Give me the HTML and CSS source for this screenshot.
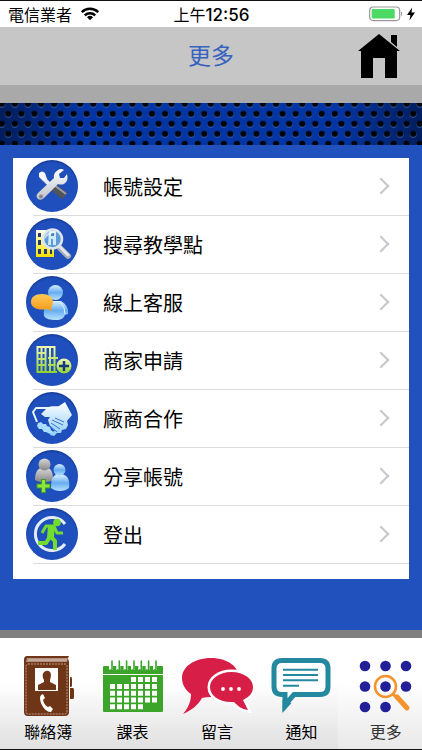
FILE: index.html
```html
<!doctype html>

<html lang="zh-Hant">
  <head>
    <meta charset="utf-8"/>
    <title>更多</title>
    <meta name="viewport" content="width=device-width,initial-scale=1.0"/>
    <link rel="stylesheet" href="styles.css">
  </head>
  <body>
    <div class="status">
      <div class="status__side">
        <span>電信業者</span>
        <svg class="status__wifi" width="20" height="14" viewBox="0 0 20 14">
          <g fill="none" stroke="#000" stroke-width="2.5">
            <path d="M1.8 5.2a11.6 11.6 0 0 1 16.4 0"/>
            <path d="M4.8 8.3a7.4 7.4 0 0 1 10.4 0"/>
          </g>
          <path d="M10 13.2l-3-3a4.3 4.3 0 0 1 6 0z"/>
        </svg>
      </div>
      <span>上午<span class="status__time">12:56</span></span>
      <div class="status__side status__side-right">
        <svg width="34" height="16" viewBox="0 0 34 16">
          <rect x=".7" y="1" width="30" height="13.6" rx="3.5" fill="#fff" stroke="#999" stroke-width="1.2"/>
          <rect x="2.7" y="3" width="23" height="9.6" rx="1.2" fill="#4cd964"/>
          <path d="M32 5.5c1.6.7 1.6 4 0 4.7z" fill="#999"/>
        </svg>
        <svg width="8" height="14" viewBox="0 0 8 14">
          <path d="M5.2.5L0 8h3.4l-1 5.5L8 5.6H4.5z"/>
        </svg>
      </div>
    </div>

    <header class="header">
      <h1 class="header__title">更多</h1>
      <button class="header__home" type="button" aria-label="首頁">
        <svg width="42" height="44" viewBox="0 0 42 44">
          <path d="M21 0L42 17h-3v27H27V24H15v20H3V17H0zM33 1h6v12l-6-5z"/>
        </svg>
      </button>
    </header>

    <!-- perforated metal strip -->
    <svg class="mesh" aria-hidden="true">
      <defs>
        <pattern id="holes" x="1.8" y=".8" width="13.06" height="20" patternUnits="userSpaceOnUse">
          <g fill="#4a6cb5">
            <ellipse cx="6.5" cy="10.6" rx="3.300" ry="3.200"/>
            <ellipse cx="0" cy=".6" rx="3.300" ry="3.200"/>
            <ellipse cx="13.060" cy=".6" rx="3.300" ry="3.200"/>
          </g>
          <g fill="#02040c">
            <ellipse cx="6.500" cy="10" rx="3.200" ry="3"/>
            <ellipse cx="0" cy="0" rx="3.200" ry="3"/>
            <ellipse cx="13.060" cy="0" rx="3.200" ry="3"/>
            <ellipse cx="0" cy="20" rx="3.200" ry="3"/>
            <ellipse cx="13.060" cy="20" rx="3.200" ry="3"/>
          </g>
        </pattern>
      </defs>
      <rect width="100%" height="100%" fill="url(#holes)"/>
    </svg>

    <main class="main">
      <ul class="menu">
        <li class="menu__item">
          <a class="menu__link" href="#account">
            <svg class="menu__icon" viewBox="0 0 52 52">
              <defs>
                <radialGradient id="disc" cx=".5" cy=".53" r=".53">
                  <stop offset=".88" stop-color="#1f4fbd"/>
                  <stop offset="1" stop-color="#143a96"/>
                </radialGradient>
                <linearGradient id="silver" x2="0" y2="1">
                  <stop stop-color="#fff"/>
                  <stop offset="1" stop-color="#bcc1c8"/>
                </linearGradient>
                <linearGradient id="grey" x2="0" y2="1">
                  <stop stop-color="#d8d8d8"/>
                  <stop offset="1" stop-color="#858585"/>
                </linearGradient>
                <linearGradient id="sky" x2="0" y2="1">
                  <stop stop-color="#d6f0ff"/>
                  <stop offset=".5" stop-color="#67adf0"/>
                  <stop offset="1" stop-color="#b5e2ff"/>
                </linearGradient>
                <linearGradient id="ice" x2="0" y2="1">
                  <stop stop-color="#fff"/>
                  <stop offset="1" stop-color="#8fcdf8"/>
                </linearGradient>
                <linearGradient id="lime" x2="0" y2="1">
                  <stop stop-color="#f3f7b0"/>
                  <stop offset="1" stop-color="#8fd131"/>
                </linearGradient>
                <linearGradient id="orange" x2="0" y2="1">
                  <stop stop-color="#ffca55"/>
                  <stop offset="1" stop-color="#f39a18"/>
                </linearGradient>
                <linearGradient id="building" x2="0" y2="1">
                  <stop stop-color="#fffef0"/>
                  <stop offset=".5" stop-color="#fff36c"/>
                  <stop offset="1" stop-color="#f5e100"/>
                </linearGradient>
              </defs>
              <circle cx="26" cy="26" r="26" fill="url(#disc)"/>
              <path d="M16 14l3 6 8 8" fill="none" stroke="#e9ebf0" stroke-width="4"/>
              <path d="M13 13q3-3 6 0l2 6-4 2-4-4z" fill="#f3f4f7"/>
              <path d="M27 27l12 9" stroke="#50545c" stroke-width="8"/>
              <path d="M28 25l12 9" stroke="#9a9ea6" stroke-width="2"/>
              <path d="M32 10q3-2 6 0l-5 4 1 4 4 0 3-4q2 7-3 10-3 1-6 0L18 38q-3 3-6 1-3-3 0-6l16-15q-1-5 4-8z" fill="url(#silver)"/>
              <circle cx="15" cy="36.500" r="2" fill="#83878e"/>
            </svg>
            <span>帳號設定</span>
          </a>
        </li>
        <li class="menu__item">
          <a class="menu__link" href="#search">
            <svg class="menu__icon" viewBox="0 0 52 52">
              <circle cx="26" cy="26" r="26" fill="url(#disc)"/>
              <path d="M10 12h18v27H10z" fill="url(#building)"/>
              <path d="M12 15h3v4h-3zM18 15h3v4h-3zM12 22h3v5h-3zM18 22h3v5h-3zM12 31h3v5h-3zM18 31h3v5h-3zM24 31h2v5h-2z" fill="#273d70"/>
              <path d="M33 29l9 9" stroke="#a4abb9" stroke-width="6" stroke-linecap="round"/>
              <path d="M33 28l9 9" stroke="#e3e6ec" stroke-width="3" stroke-linecap="round"/>
              <circle cx="26.500" cy="21" r="9.500" fill="#5f9bd8" stroke="#dfe6ec" stroke-width="2.500"/>
              <path d="M23 13h7v14h-3v-6h-2v6h-3z" fill="#cdeaf8"/>
              <path d="M25 15h3v3h-3z" fill="#4a83c4"/>
              <path d="M18 22c1-8 8-10 13-8-5 1-9 3-13 8z" fill="#fff" opacity=".6"/>
            </svg>
            <span>搜尋教學點</span>
          </a>
        </li>
        <li class="menu__item">
          <a class="menu__link" href="#service">
            <svg class="menu__icon" viewBox="0 0 52 52">
              <circle cx="26" cy="26" r="26" fill="url(#disc)"/>
              <path d="M18 40c-1-6 1-12 6-15h11c5 3 8 8 7 13l-3 1c-1 3-4 5-9 5-6 0-10-1-12-4z" fill="url(#sky)"/>
              <path d="M35 27q4 4 4 11" fill="none" stroke="#e1f5ff"/>
              <circle cx="29.500" cy="16.500" r="7.500" fill="url(#sky)"/>
              <path d="M16 18c7 0 11 3 11 8 0 2-1 4-2 5l1 4-5-2c-8 2-16-1-16-7 0-5 4-8 11-8z" fill="url(#orange)"/>
            </svg>
            <span>線上客服</span>
          </a>
        </li>
        <li class="menu__item">
          <a class="menu__link" href="#shop">
            <svg class="menu__icon" viewBox="0 0 52 52">
              <circle cx="26" cy="26" r="26" fill="url(#disc)"/>
              <path d="M11.500 12v27M15.500 12v27M19.500 12v27M24 12v27M28.500 12v27M11 13h18M11 19h9M11 25h9M11 31h9M11 38h20M22 24h10M22 31h9" fill="none" stroke="url(#lime)" stroke-width="2"/>
              <circle cx="38" cy="32" r="8.500" fill="#1f4fbd"/>
              <circle cx="38" cy="32" r="7.500" fill="url(#lime)"/>
              <path d="M38 27v10M33 32h10" stroke="#12397d" stroke-width="2.500"/>
            </svg>
            <span>商家申請</span>
          </a>
        </li>
        <li class="menu__item">
          <a class="menu__link" href="#partner">
            <svg class="menu__icon" viewBox="0 0 52 52">
              <circle cx="26" cy="26" r="26" fill="url(#disc)"/>
              <path d="M24 16H10l-3 4 4 10" fill="none" stroke="#e7f5ff" stroke-width="2" stroke-linejoin="round"/>
              <path d="M39 10l7 13-5 6 1 4-2 4-4 1-1 3-4 0-3 3-4-1 1-3 4-1-5-5-2-6 2-3-5 0-4-3 6-6c5-3 9-1 12-2z" fill="url(#ice)"/>
              <path d="M26 28l11 5M25 31l9 6M24 34l7 6M29 26l9 4" stroke="#3773c8"/>
              <path d="M12 31l3-1 2 2 3 0 1 2 3 1 1 3 2 2-3 2-4-2-2 0-2-3-3 0-2-3z" fill="#a8ddff"/>
            </svg>
            <span>廠商合作</span>
          </a>
        </li>
        <li class="menu__item">
          <a class="menu__link" href="#share">
            <svg class="menu__icon" viewBox="0 0 52 52">
              <circle cx="26" cy="26" r="26" fill="url(#disc)"/>
              <path d="M9 30c0-7 2-11 6-12h7c4 1 5 6 5 12-5 3-13 3-18 0z" fill="url(#grey)"/>
              <circle cx="18.500" cy="14.500" r="6" fill="url(#grey)"/>
              <path d="M25 38c0-7 1-12 5-13h8c4 1 6 6 5 13-5 4-13 4-18 0z" fill="url(#sky)"/>
              <circle cx="33.500" cy="20" r="6" fill="url(#sky)"/>
              <path d="M17.500 29v14M10.500 36h14" stroke="#3f9b26" stroke-width="5"/>
              <path d="M17.500 30v12M11.500 36h12" stroke="#8be83b" stroke-width="3"/>
            </svg>
            <span>分享帳號</span>
          </a>
        </li>
        <li class="menu__item">
          <a class="menu__link" href="#logout">
            <svg class="menu__icon" viewBox="0 0 52 52">
              <circle cx="26" cy="26" r="26" fill="url(#disc)"/>
              <path d="M39 16a16.500 16.500 0 1 0 0 20" fill="none" stroke="#e4ecfa" stroke-width="3"/>
              <circle cx="31" cy="14.500" r="3.800" fill="#72dc2f"/>
              <g fill="none" stroke="#72dc2f" stroke-width="4" stroke-linejoin="round">
                <path d="M16 25l4-7h8l3 7h6" stroke-width="3"/>
                <path d="M25 27l-5 8h-8"/>
                <path d="M24 28l5 5v9"/>
              </g>
              <path d="M22 17l7 1-1 11-7 1z" fill="#72dc2f"/>
            </svg>
            <span>登出</span>
          </a>
        </li>
      </ul>
    </main>

    <nav class="tabs">
      <a class="tab" href="#contacts">
        <svg class="tab__icon" viewBox="0 0 72 64">
          <path d="M15 2h42l-1 2 1 4v50q0 4-4 4H16q-4 0-4-4V6q0-4 3-4z" fill="#6e3516"/>
          <path d="M15 4h41l-1 4H14z" fill="#b39282"/>
          <path d="M16 6h39" stroke="#e7d9d0" stroke-width=".6"/>
          <path d="M58 23h1q1 0 1 2v6q0 2-1 2h-1zM58 34h3q1 0 1 2v7q0 2-1 2h-3z" fill="#6e3516"/>
          <rect x="14" y="10" width="41" height="50" rx="2" fill="none" stroke="#d7bba8" stroke-width=".8" stroke-dasharray="2 1"/>
          <path d="M23 14h23v23H23z" fill="#fff"/>
          <path d="M26 36v-5l6-3v-2c-2-3-2-8 2-9 5-1 6 4 4 9v2l6 3v5z" fill="#6e3516"/>
          <path d="M31 40l2 4-2 2c1 4 3 6 5 7l2-1 3 3-2 3c-6 0-11-8-11-14q0-3 3-4z" fill="#fff"/>
        </svg>
        <span>聯絡簿</span>
      </a>
      <a class="tab" href="#schedule">
        <svg class="tab__icon" viewBox="0 0 72 64">
          <path d="M7 12h58q1 0 1 1v7H6v-7q0-1 1-1zM6 21h60v36q0 1-1 1H7q-1 0-1-1z" fill="#3ba52a"/>
          <g fill="none" stroke="#fff" stroke-width="4">
            <path d="M14 10v6M21.300 10v6M28.600 10v6M36 10v6M43.300 10v6M50.600 10v6M58 10v6"/>
          </g>
          <path d="M15 7v8q0 2-2 1M22.300 7v8q0 2-2 1M29.600 7v8q0 2-2 1M37 7v8q0 2-2 1M44.300 7v8q0 2-2 1M51.600 7v8q0 2-2 1M59 7v8q0 2-2 1" fill="none" stroke="#3ba52a" stroke-width="1.600" stroke-linecap="round"/>
          <g fill="none" stroke="#fff" stroke-width="5" stroke-dasharray="5 2">
            <path d="M34 25.500h26M13 32.500h47M13 39.300h47M13 46h47M13 52.800h33"/>
          </g>
        </svg>
        <span>課表</span>
      </a>
      <a class="tab" href="#messages">
        <svg class="tab__icon" viewBox="0 0 72 64">
          <path d="M30 4c17 0 28 9 28 20S47 43 30 43q-5 0-9 1c-4 7-10 12-19 16 5-6 8-12 8-20C4 36 1 30 1 24 1 13 13 4 30 4z" fill="#d71e46"/>
          <path d="M50.500 18C63 18 72 25 72 33c0 6-4 10-10 13l5 10c-7-1-10-4-14-8h-3c-13 0-21-7-21-15s9-15 21.500-15z" fill="#d71e46" stroke="#fff" stroke-width="5" paint-order="stroke"/>
          <g fill="#fff">
            <circle cx="42" cy="35" r="1.900"/>
            <circle cx="50" cy="35" r="1.900"/>
            <circle cx="58" cy="35" r="1.900"/>
          </g>
        </svg>
        <span>留言</span>
      </a>
      <a class="tab" href="#notices">
        <svg class="tab__icon" viewBox="0 0 72 64">
          <path d="M17 6.500h38q8 0 8 8v18q0 8-8 8H29L20 51V40.500h-3q-8 0-8-8v-18q0-8 8-8z" fill="#fff" stroke="#24889e" stroke-width="5"/>
          <path d="M17.500 46v13l9-10z" fill="#24889e"/>
          <path d="M18 15.700h35M18 21h35M18 26.300h35M18 31.700h16" stroke="#24889e" stroke-width="2"/>
        </svg>
        <span>通知</span>
      </a>
      <a class="tab tab-active" href="#more" aria-current="page">
        <svg class="tab__icon" viewBox="0 0 72 64">
          <g fill="#221f99">
            <circle cx="15" cy="12" r="5.300"/>
            <circle cx="35.500" cy="12" r="5.300"/>
            <circle cx="56" cy="12" r="5.300"/>
            <circle cx="15" cy="32.500" r="5.300"/>
            <circle cx="35.500" cy="32.500" r="5.300"/>
            <circle cx="56" cy="32.500" r="5.300"/>
            <circle cx="15" cy="53" r="5.300"/>
            <circle cx="35.500" cy="53" r="5.300"/>
          </g>
          <circle cx="35.500" cy="32.500" r="10.500" fill="none" stroke="#f7932c" stroke-width="2.500"/>
          <path d="M43 40l5 5" stroke="#f7932c" stroke-width="3"/>
          <path d="M47 43l10 11" stroke="#f7932c" stroke-width="5" stroke-linecap="round"/>
        </svg>
        <span>更多</span>
      </a>
    </nav>
  </body>
</html>
```
FILE: styles.css
```css
body {
  font-family: "Liberation Sans", "Noto Sans CJK TC", sans-serif;
  font-size: 16px;
  color: #000;
  background-color: #2151bd;
  margin: 0;
  min-height: 100vh;
  box-sizing: border-box;
  border-top: 1px solid #111;
  border-bottom: 1px solid #111;
  display: flex;
  flex-direction: column;
}
.status {
  display: flex;
  align-items: center;
  height: 26px;
  padding: 0 7px 0 8px;
  background-color: #fff;
  font-family: Inter, "Noto Sans CJK TC", sans-serif;
}
.status__side {
  flex: 1;
  display: flex;
  align-items: center;
  gap: 8px;
}
.status__side-right {
  justify-content: flex-end;
  gap: 4px;
}
.status__time {
  font-size: 17px;
  font-weight: 500;
}
.header {
  display: grid;
  grid-template-columns: 1fr auto 1fr;
  align-items: center;
  height: 58px;
  padding: 0 22px;
  background-color: #c6c6c6;
  border-bottom: 18px solid #a9a9a9;
}
.header__title {
  grid-column: 2;
  margin: 0;
  font-size: 23px;
  font-weight: 400;
  line-height: 32px;
  color: #3763bf;
}
.header__home {
  justify-self: end;
  padding: 0;
  border: 0;
  background: none;
  cursor: pointer;
}
.header__home svg {
  display: block;
}
.mesh {
  display: block;
  width: 100%;
  height: 42px;
  background: linear-gradient(90deg, #021d5c, #0435a5 20%, #0435a5 80%, #021d5c);
}
.main {
  flex: 1;
  padding: 13px 13px 51px;
  border-bottom: 8px solid #808080;
}
.menu {
  list-style: none;
  margin: 0;
  padding: 0 0 15px;
  background-color: #fff;
}
.menu__item {
  padding-bottom: 2px;
  background: linear-gradient(#dcdce0, #dcdce0) no-repeat 20px 100% / 100% 1px;
}
.menu__link {
  display: flex;
  align-items: center;
  gap: 25px;
  height: 56px;
  padding: 0 22px 0 13px;
  font-size: 20px;
  color: #000;
  text-decoration: none;
}
.menu__link::after {
  content: "";
  width: 10px;
  height: 10px;
  margin-left: auto;
  border: solid #c7c7cc;
  border-width: 2px 2px 0 0;
  transform: rotate(45deg);
}
.menu__icon {
  width: 52px;
  height: 52px;
}
.tabs {
  display: flex;
  height: 111px;
  background: linear-gradient(#fff 40%, #e0e0e0);
}
.tab {
  flex: 1;
  min-width: 0;
  box-sizing: border-box;
  padding: 16px 0 0 12px;
  display: flex;
  flex-direction: column;
  align-items: center;
  gap: 3px;
  line-height: 24px;
  color: #000;
  text-decoration: none;
}
.tab__icon {
  width: 72px;
  height: 64px;
}
.tab-active {
  color: #333;
  background: linear-gradient(#fff 40%, #e8e8e8);
}
```
